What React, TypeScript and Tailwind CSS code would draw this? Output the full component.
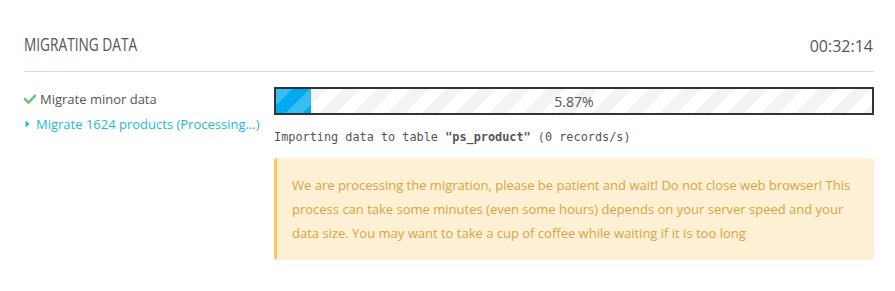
import React from "react";

function CheckIcon() {
  return (
    <svg width="12" height="10" viewBox="0 0 12 10" className="shrink-0">
      <path d="M1 5.2 L4.4 8.6 L11 1.8" fill="none" stroke="#72c279" strokeWidth="2.6" strokeLinecap="square" />
    </svg>
  );
}

function CaretIcon() {
  return (
    <svg width="5" height="8" viewBox="0 0 5 8" className="shrink-0">
      <path d="M0.5 0.5 L4.5 4 L0.5 7.5 Z" fill="#25b9d7" />
    </svg>
  );
}

export default function App() {
  const pct = 5.87;
  return (
    <div className="w-[895px] h-[291px] bg-white font-['Open_Sans',sans-serif] text-[#555] pl-6 pr-[21px]">
      <div className="flex items-start justify-between pt-8 pb-[13px] border-b border-[#dddddd]">
        <div className="h-6 text-[18px] leading-6 uppercase">
          <span className="inline-block origin-left scale-x-[0.76] whitespace-nowrap">Migrating data</span>
        </div>
        <div className="mt-[2px] text-[16px] leading-6 pr-px">00:32:14</div>
      </div>

      <div className="flex pt-[15px]">
        <div className="w-[250px] shrink-0 text-[13px] leading-[25px] -mt-[0.5px]">
          <div className="flex items-center gap-[4px]">
            <CheckIcon />
            <span>Migrate minor data</span>
          </div>
          <div className="flex items-center gap-[6px] pl-px text-[#25b9d7]">
            <CaretIcon />
            <span className="whitespace-nowrap">Migrate 1624 products (Processing...)</span>
          </div>
        </div>

        <div className="w-[600px] shrink-0">
          <div className="relative h-[28px] border-2 border-[#333] bg-white bg-[linear-gradient(135deg,#f3f3f3_25%,transparent_25%,transparent_50%,#f3f3f3_50%,#f3f3f3_75%,transparent_75%,transparent)] bg-[length:34px_34px]">
            <div
              className="h-full bg-[#00aaf0] bg-[linear-gradient(135deg,rgba(255,255,255,0.22)_25%,transparent_25%,transparent_50%,rgba(255,255,255,0.22)_50%,rgba(255,255,255,0.22)_75%,transparent_75%,transparent)] bg-[length:34px_34px]"
              style={{ width: `${pct}%` }}
            />
            <div className="absolute inset-0 flex items-center justify-center text-[14px] text-[#555]">
              5.87%
            </div>
          </div>

          <div className="mt-[13px] font-['DejaVu_Sans_Mono',monospace] text-[11.85px] leading-[18px] text-[#555] whitespace-nowrap">
            Importing data to table <b>"ps_product"</b> (0 records/s)
          </div>

          <div className="mt-[12px] rounded-[3px] border-l-[3px] border-[#fcc85b] bg-[#fdf0d5] pl-[15px] pr-[10px] py-[15px] text-[13px] leading-6 text-[#d9a540] whitespace-nowrap">
            We are processing the migration, please be patient and wait! Do not close web browser! This
            <br />
            process can take some minutes (even some hours) depends on your server speed and your
            <br />
            data size. You may want to take a cup of coffee while waiting if it is too long
          </div>
        </div>
      </div>
    </div>
  );
}
